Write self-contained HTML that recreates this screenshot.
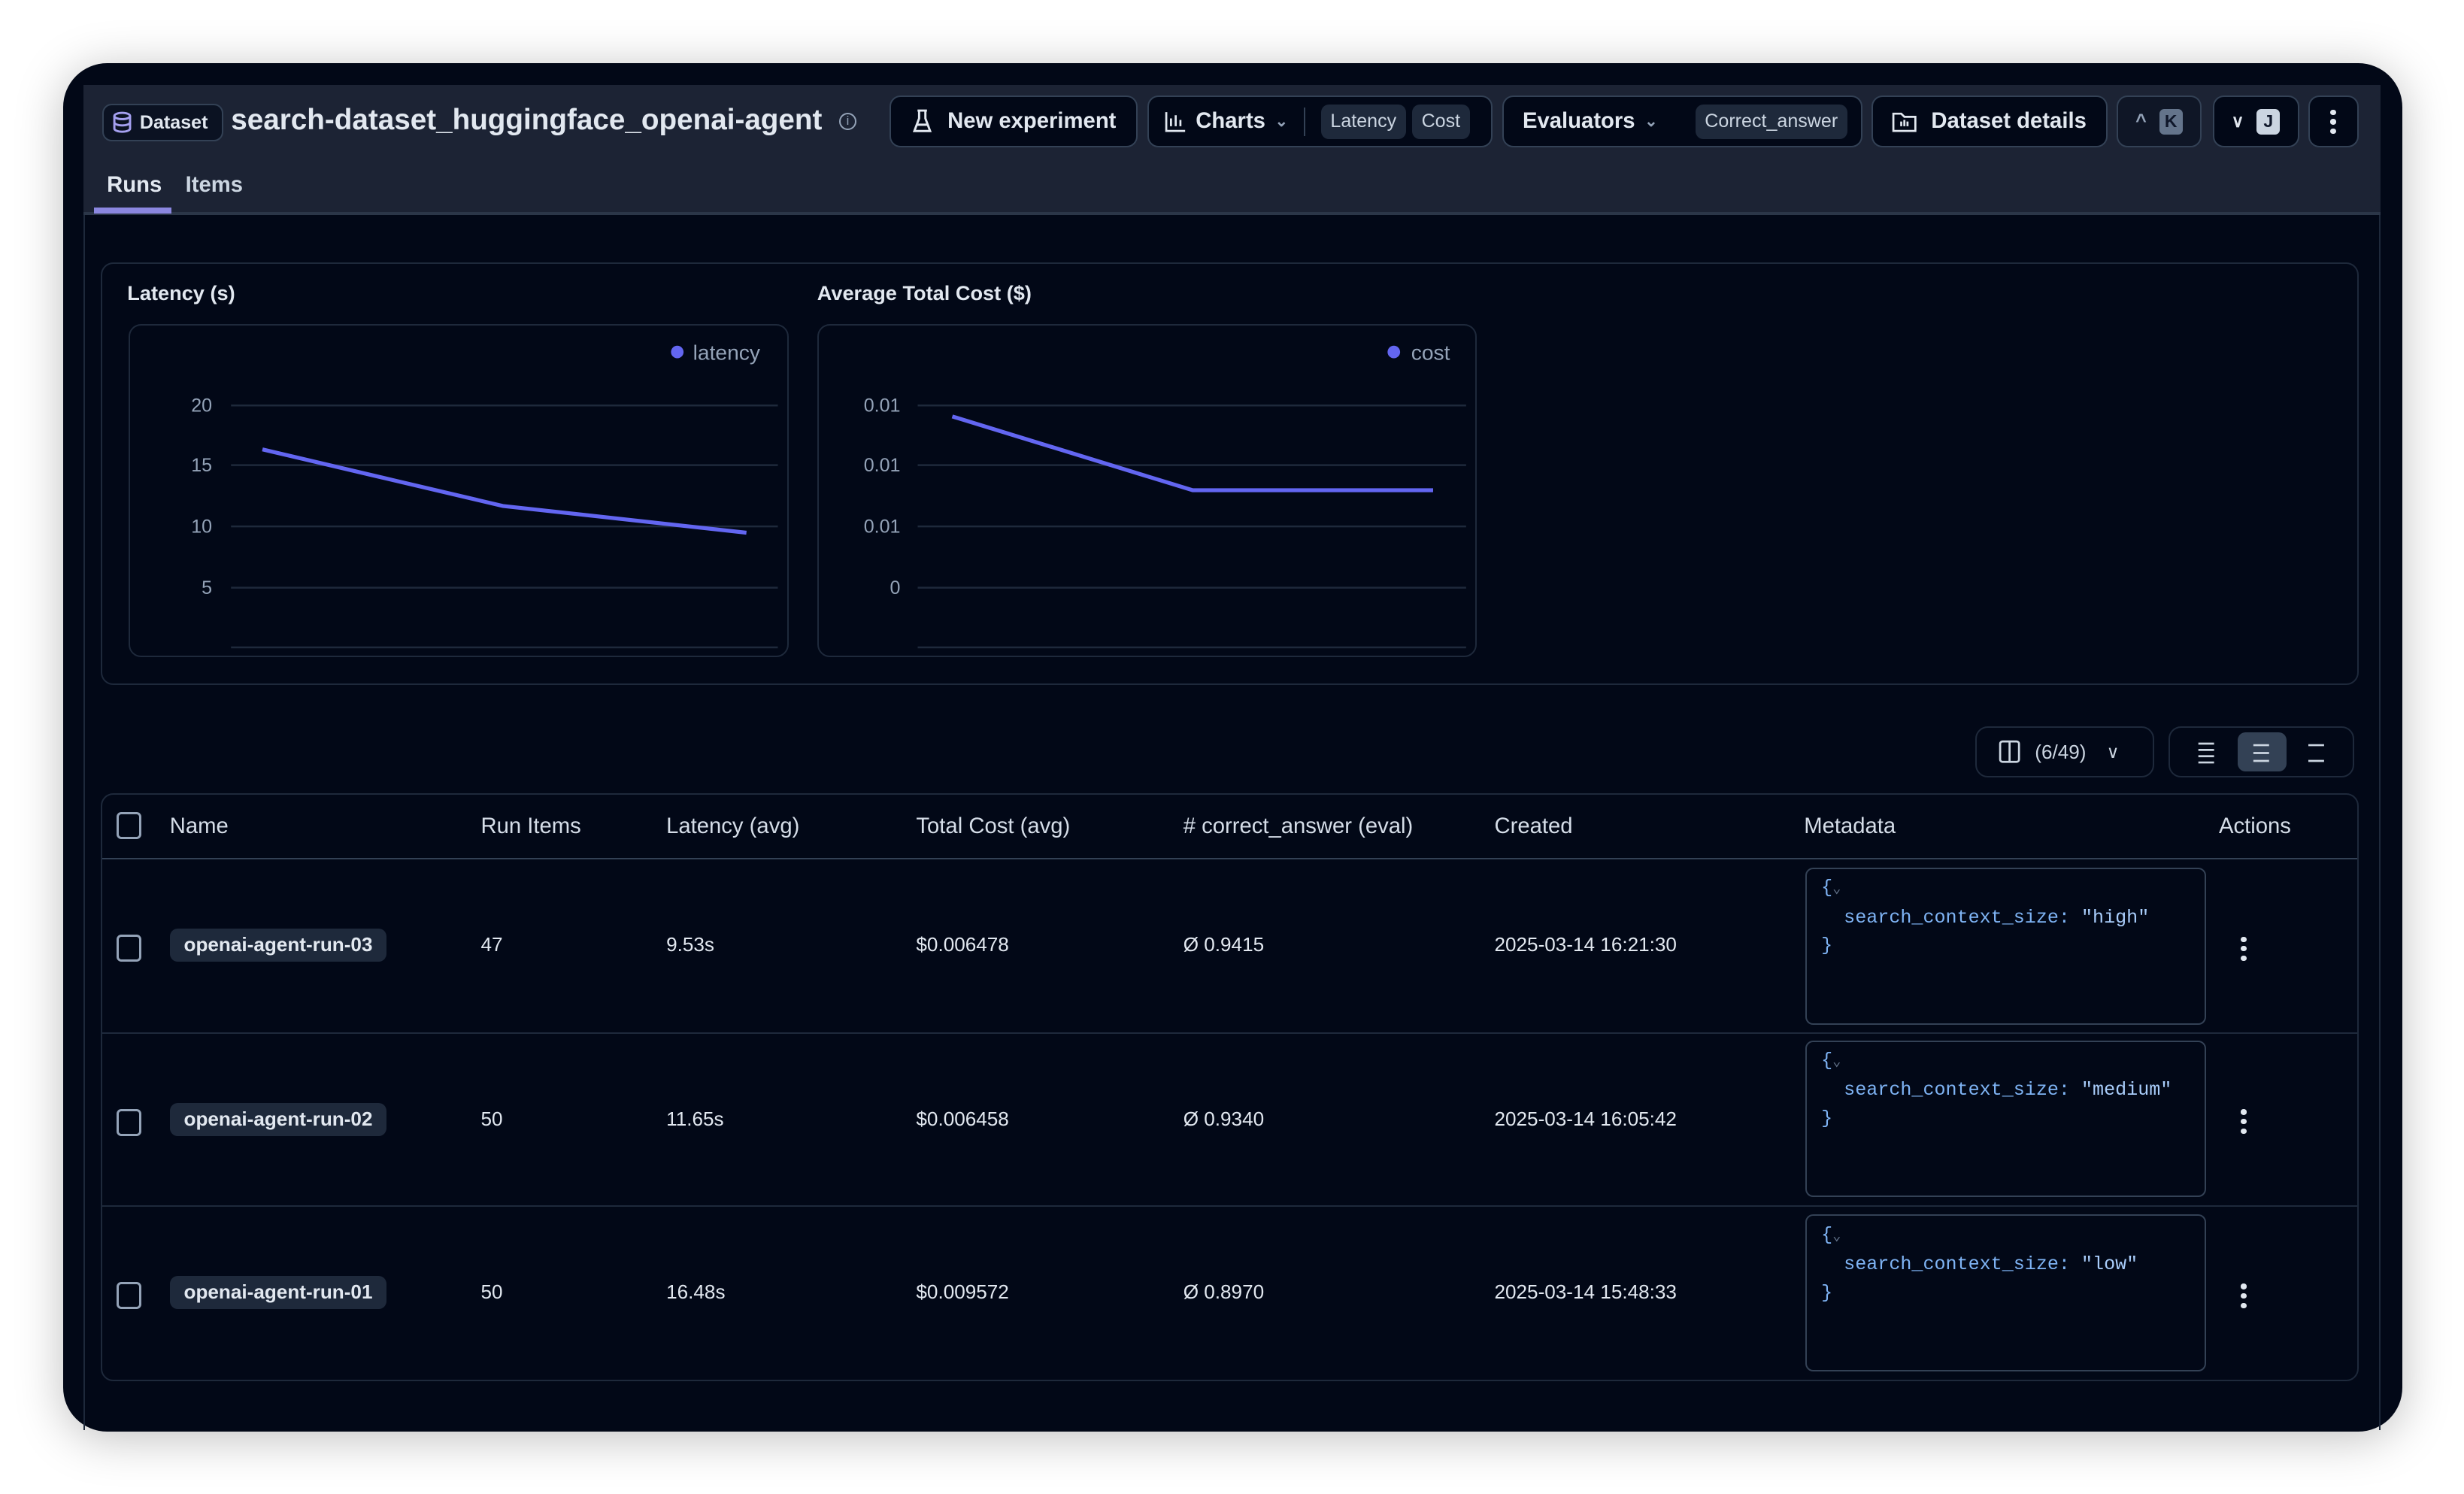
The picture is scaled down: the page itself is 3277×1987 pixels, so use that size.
<!DOCTYPE html>
<html><head><meta charset="utf-8"><style>
*{box-sizing:border-box;margin:0;padding:0}
html,body{width:3277px;height:1987px;background:#fff;overflow:hidden}
#z{zoom:2.0899;width:1568px;height:951px;position:relative;font-family:"Liberation Sans",sans-serif;color:#e2e8f0}
.a{position:absolute}
.win{left:40px;top:40px;width:1489px;height:871px;background:#020817;border-radius:28px;box-shadow:0 4px 30px rgba(0,0,0,.25);overflow:hidden}
.panel{left:53px;top:54px;width:1462px;height:856px;border-left:1px solid #1e293b;border-right:1px solid #1e293b}
.hdr{left:53px;top:54px;width:1462px;height:83px;background:#1c2334;border-bottom:2px solid #2b3648}
.btn{position:absolute;top:61px;height:33px;border:1px solid #334155;border-radius:7px;background:#020817;font-size:14px;font-weight:bold;display:flex;align-items:center;padding:0 10px;gap:6px;color:#e2e8f0}
.chip{background:#1e293b;border-radius:5px;font-size:12px;font-weight:normal;padding:4px 6px;color:#cbd5e1}
.sep{width:1px;height:18px;background:#334155;margin:0 4px}
.kbd{display:inline-block;width:15px;height:16px;border-radius:3px;font-size:11px;text-align:center;line-height:16px;color:#0f172a}
.card{border:1px solid #1e293b;border-radius:8px}
.th{position:absolute;top:518px;font-size:14px;color:#d5dde8}
.cb{position:absolute;width:16px;height:17px;border:1.5px solid #94a3b8;border-radius:3px}
.cell{position:absolute;font-size:12.5px;color:#e2e8f0}
.name{position:absolute;left:108px;background:#1e293b;border-radius:5px;font-size:12.5px;font-weight:bold;padding:3px 9px;color:#e2e8f0}
.meta{position:absolute;left:1149px;width:255px;height:100px;border:1px solid #334155;border-radius:5px;font-family:"Liberation Mono",monospace;font-size:12px;color:#7fb4f5;padding:3px 9px;line-height:18px;white-space:pre}
.dots{position:absolute;left:1426px;width:4px}
.dots i{display:block;width:3.5px;height:3.5px;border-radius:50%;background:#e2e8f0;margin-bottom:2.5px}
</style></head><body><div id="z">
<div class="a win"></div>
<div class="a panel"></div>
<div class="a hdr"></div>
<div class="a" style="left:65px;top:66px;width:77px;height:24px;border:1px solid #334155;border-radius:6px;background:#0b1222;display:flex;align-items:center;gap:5px;padding-left:6px;font-size:12px;font-weight:bold">
<svg width="12" height="14" viewBox="0 0 12 14" fill="none" stroke="#a5a0f0" stroke-width="1.4"><ellipse cx="6" cy="3" rx="5" ry="2"/><path d="M1 3v8c0 1.1 2.2 2 5 2s5-.9 5-2V3M1 7c0 1.1 2.2 2 5 2s5-.9 5-2"/></svg>Dataset</div>
<div class="a" style="left:147px;top:66px;font-size:18.5px;font-weight:bold;color:#e2e8f0">search-dataset_huggingface_openai-agent</div>
<div class="a" style="left:534px;top:72px;width:11px;height:11px;border:1px solid #94a3b8;border-radius:50%;font-size:8px;text-align:center;line-height:9px;color:#94a3b8">i</div>
<div class="btn" style="left:566px;width:158px;padding-left:14px;gap:10px"><svg width="12" height="16" viewBox="0 0 12 16" fill="none" stroke="#e2e8f0" stroke-width="1.4"><path d="M3 1h6M4 1v5L1 14h10L8 6V1M2.5 10h7"/></svg>New experiment</div>
<div class="btn" style="left:730px;width:220px"><svg width="14" height="14" viewBox="0 0 14 14" fill="none" stroke="#e2e8f0" stroke-width="1.3"><path d="M1 1v12h12M4 10V5M7 10V3M10 10V6"/></svg>Charts <span style="font-size:10px;color:#94a3b8">&#8964;</span><span class="sep"></span><span class="chip">Latency</span><span class="chip" style="margin-left:-2px">Cost</span></div>
<div class="btn" style="left:956px;width:229px;padding-left:12px">Evaluators <span style="font-size:10px;color:#94a3b8">&#8964;</span><span class="sep" style="margin:0 6px"></span><span class="chip">Correct_answer</span></div>
<div class="btn" style="left:1191px;width:150px;padding-left:12px;gap:9px"><svg width="16" height="14" viewBox="0 0 16 14" fill="none" stroke="#e2e8f0" stroke-width="1.3"><path d="M1 2h5l2 2h7v9H1z M6 7v3M8 6v4M10 7v3"/></svg>Dataset details</div>
<div class="btn" style="left:1347px;width:54px;gap:8px;justify-content:center;background:#0f1626"><span style="font-size:12px;color:#94a3b8">^</span><span class="kbd" style="background:#64748b">K</span></div>
<div class="btn" style="left:1408px;width:55px;gap:8px;justify-content:center"><span style="font-size:11px;color:#e2e8f0">&#8744;</span><span class="kbd" style="background:#cbd5e1">J</span></div>
<div class="btn" style="left:1469px;width:32px;justify-content:center;padding:0"><span class="dots" style="position:static"><i></i><i></i><i style="margin:0"></i></span></div>
<div class="a" style="left:68px;top:110px;font-size:14px;font-weight:bold;color:#e2e8f0">Runs</div>
<div class="a" style="left:118px;top:110px;font-size:14px;font-weight:bold;color:#cbd5e1">Items</div>
<div class="a" style="left:60px;top:132px;width:49px;height:4px;background:#8b87e0"></div>

<div class="a card" style="left:64px;top:167px;width:1437px;height:269px"></div>
<div class="a" style="left:81px;top:179px;font-size:13px;font-weight:bold">Latency (s)</div>
<div class="a" style="left:520px;top:179px;font-size:13px;font-weight:bold">Average Total Cost ($)</div>
<div class="a card" style="left:82px;top:206px;width:420px;height:212px"></div>
<div class="a card" style="left:520px;top:206px;width:420px;height:212px"></div>
<svg class="a" style="left:0;top:0" width="1568" height="951">
<g stroke="#1e293b" stroke-width="1.2">
<path d="M147 258H495M147 296H495M147 335H495M147 374H495M147 412H495"/>
<path d="M584 258H933M584 296H933M584 335H933M584 374H933M584 412H933"/>
</g>
<g font-family="Liberation Sans" font-size="12" fill="#94a3b8" text-anchor="end">
<text x="135" y="262">20</text><text x="135" y="300">15</text><text x="135" y="339">10</text><text x="135" y="378">5</text>
<text x="573" y="262">0.01</text><text x="573" y="300">0.01</text><text x="573" y="339">0.01</text><text x="573" y="378">0</text>
</g>
<polyline points="167,286 320,322 475,339" fill="none" stroke="#6366f1" stroke-width="2.5"/>
<polyline points="606,265 759,312 912,312" fill="none" stroke="#6366f1" stroke-width="2.5"/>
<circle cx="431" cy="224" r="4" fill="#6366f1"/><circle cx="887" cy="224" r="4" fill="#6366f1"/>
<g font-family="Liberation Sans" font-size="13.5" fill="#94a3b8"><text x="441" y="229">latency</text><text x="898" y="229">cost</text></g>
</svg>

<div class="a card" style="left:1257px;top:462px;width:114px;height:33px;display:flex;align-items:center;padding-left:14px;gap:9px;font-size:12.5px;color:#cbd5e1"><svg width="14" height="15" viewBox="0 0 14 15" fill="none" stroke="#cbd5e1" stroke-width="1.3"><rect x="1" y="1" width="12" height="13" rx="1.5"/><path d="M7 1v13"/></svg>(6/49)<span style="margin-left:4px;font-size:11px">&#8744;</span></div>
<div class="a card" style="left:1380px;top:462px;width:118px;height:33px"></div>
<div class="a" style="left:1424px;top:466px;width:31px;height:25px;background:#334155;border-radius:5px"></div>
<svg class="a" style="left:1380px;top:462px" width="118" height="33" stroke="#cbd5e1" stroke-width="1.3"><path d="M19 11h10M19 15h10M19 19h10M19 23h10"/><path d="M54 12h10M54 17h10M54 22h10"/><path d="M89 12h10M89 22h10"/></svg>

<div class="a card" style="left:64px;top:505px;width:1437px;height:374px"></div>
<div class="a" style="left:65px;top:546px;width:1435px;height:1px;background:#334155"></div>
<div class="a" style="left:65px;top:657px;width:1435px;height:1px;background:#1e293b"></div>
<div class="a" style="left:65px;top:767px;width:1435px;height:1px;background:#1e293b"></div>
<div class="cb" style="left:74px;top:517px"></div>
<div class="th" style="left:108px">Name</div><div class="th" style="left:306px">Run Items</div><div class="th" style="left:424px">Latency (avg)</div><div class="th" style="left:583px">Total Cost (avg)</div><div class="th" style="left:753px"># correct_answer (eval)</div><div class="th" style="left:951px">Created</div><div class="th" style="left:1148px">Metadata</div><div class="th" style="left:1412px">Actions</div>

<div class="cb" style="left:74px;top:595px"></div><div class="name" style="top:591px">openai-agent-run-03</div>
<div class="cell" style="left:306px;top:594px">47</div><div class="cell" style="left:424px;top:594px">9.53s</div><div class="cell" style="left:583px;top:594px">$0.006478</div><div class="cell" style="left:753px;top:594px">Ø 0.9415</div><div class="cell" style="left:951px;top:594px">2025-03-14 16:21:30</div>
<div class="meta" style="top:552px">{<span style="color:#64748b;font-size:9px">&#8964;</span>
  search_context_size: <span style="color:#a9cdfb">"high"</span>
}</div>
<div class="dots" style="top:596px"><i></i><i></i><i></i></div>

<div class="cb" style="left:74px;top:706px"></div><div class="name" style="top:702px">openai-agent-run-02</div>
<div class="cell" style="left:306px;top:705px">50</div><div class="cell" style="left:424px;top:705px">11.65s</div><div class="cell" style="left:583px;top:705px">$0.006458</div><div class="cell" style="left:753px;top:705px">Ø 0.9340</div><div class="cell" style="left:951px;top:705px">2025-03-14 16:05:42</div>
<div class="meta" style="top:662px">{<span style="color:#64748b;font-size:9px">&#8964;</span>
  search_context_size: <span style="color:#a9cdfb">"medium"</span>
}</div>
<div class="dots" style="top:706px"><i></i><i></i><i></i></div>

<div class="cb" style="left:74px;top:816px"></div><div class="name" style="top:812px">openai-agent-run-01</div>
<div class="cell" style="left:306px;top:815px">50</div><div class="cell" style="left:424px;top:815px">16.48s</div><div class="cell" style="left:583px;top:815px">$0.009572</div><div class="cell" style="left:753px;top:815px">Ø 0.8970</div><div class="cell" style="left:951px;top:815px">2025-03-14 15:48:33</div>
<div class="meta" style="top:773px">{<span style="color:#64748b;font-size:9px">&#8964;</span>
  search_context_size: <span style="color:#a9cdfb">"low"</span>
}</div>
<div class="dots" style="top:817px"><i></i><i></i><i></i></div>
</div></body></html>
